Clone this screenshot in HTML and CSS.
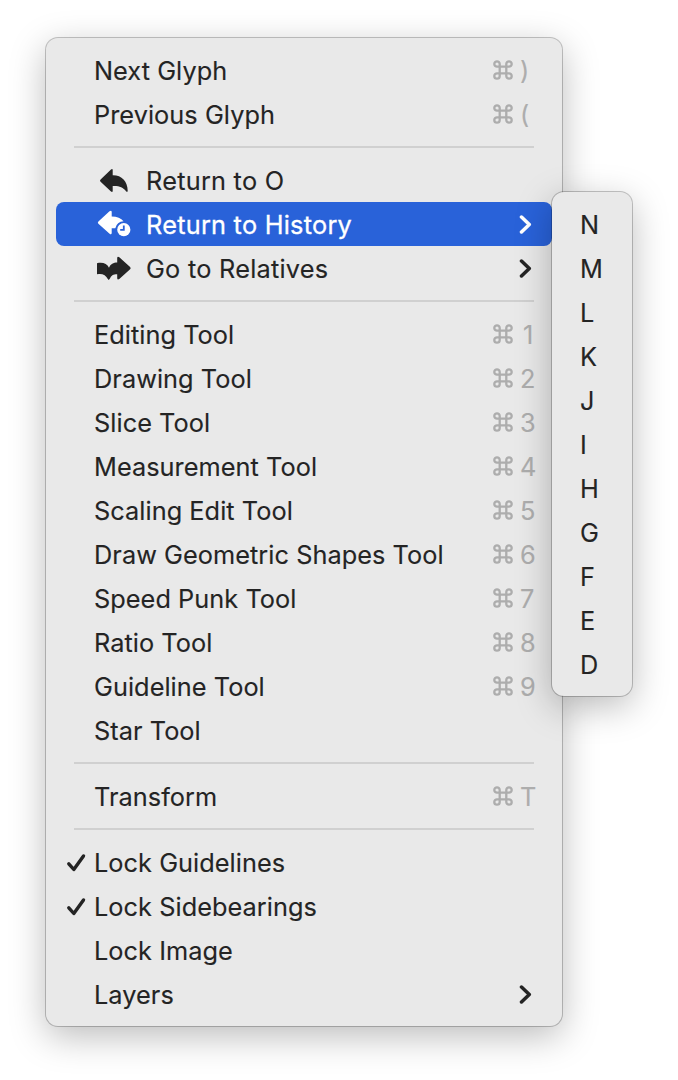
FILE: index.html
```
<!DOCTYPE html>
<html lang="en">
<head>
<meta charset="utf-8">
<title>Menu</title>
<link rel="stylesheet" href="styles.css">
</head>
<body>
<svg class="defs" width="0" height="0">
  <symbol id="cmd" viewBox="0 0 20 20"><path d="M6.700 6.700V4A2.700 2.700 0 1 0 4 6.700H16A2.700 2.700 0 1 0 13.300 4V16A2.700 2.700 0 1 0 16 13.300H4A2.700 2.700 0 1 0 6.700 16Z"/></symbol>
  <symbol id="chev" viewBox="0 0 14 20"><path d="M3.500 3L11.300 10.500L3.500 18"/></symbol>
  <symbol id="check" viewBox="0 0 20 20"><path d="M2.800 11.800L7.800 17.500L17.500 4"/></symbol>
</svg>
<div class="stage">
  <ul class="menu">
    <li class="item"><span class="label">Next Glyph</span><svg class="cmd"><use href="#cmd"/></svg><span class="key">)</span></li>
    <li class="item"><span class="label">Previous Glyph</span><svg class="cmd"><use href="#cmd"/></svg><span class="key">(</span></li>
    <li class="sep"></li>
    <li class="item wide"><svg class="icon" viewBox="0 0 40 44"><path d="M6.6 21.4L17 11.5Q18.6 10.4 18.7 12V17.2C27.500 17 33.700 23 33.700 33Q33.500 34.500 32.200 33.400C29 29 25 27.700 18.700 28V33Q18.500 34.600 17 33.500L6.600 23.800Q5.300 22.600 6.600 21.400Z"/></svg><span class="label">Return to O</span></li>
    <li class="item wide active"><svg class="icon" viewBox="0 0 40 44"><path d="M4.400 19.400L15.500 9.300Q17.600 8 17.700 10V14.600C23 14.700 27.200 16.300 29.500 19.200A8.500 8.500 0 0 0 21.300 26.200H17.700V31Q17.500 33 15.600 31.700L4.400 21.700Q3.200 20.500 4.400 19.400Z"/><circle cx="29.800" cy="27.700" r="6.600"/><path class="hands" d="M29.800 23.600V27.900H26.200"/></svg><span class="label">Return to History</span><svg class="chev"><use href="#chev"/></svg></li>
    <li class="item wide"><svg class="icon" viewBox="0 0 40 44"><path d="M3 17.200C8.500 16 13 17.300 15 21.800C16.500 18 19.500 16.500 23.200 16.500V12Q23.400 9.900 25.300 11.200L36.100 20.900Q37.300 22 36.100 23.200L25.300 33.100Q23.400 34.300 23.200 32.300V28.200C19 28.200 17.300 29.500 15.600 33.100Q14.700 34.700 13.800 33.100C12 29 8 27.200 3.600 28.200Q3 28.300 3 27.500Z"/></svg><span class="label">Go to Relatives</span><svg class="chev"><use href="#chev"/></svg></li>
    <li class="sep"></li>
    <li class="item"><span class="label">Editing Tool</span><svg class="cmd"><use href="#cmd"/></svg><span class="key one">1</span></li>
    <li class="item"><span class="label">Drawing Tool</span><svg class="cmd"><use href="#cmd"/></svg><span class="key">2</span></li>
    <li class="item"><span class="label">Slice Tool</span><svg class="cmd"><use href="#cmd"/></svg><span class="key">3</span></li>
    <li class="item"><span class="label">Measurement Tool</span><svg class="cmd"><use href="#cmd"/></svg><span class="key">4</span></li>
    <li class="item"><span class="label">Scaling Edit Tool</span><svg class="cmd"><use href="#cmd"/></svg><span class="key">5</span></li>
    <li class="item"><span class="label">Draw Geometric Shapes Tool</span><svg class="cmd"><use href="#cmd"/></svg><span class="key">6</span></li>
    <li class="item"><span class="label">Speed Punk Tool</span><svg class="cmd"><use href="#cmd"/></svg><span class="key">7</span></li>
    <li class="item"><span class="label">Ratio Tool</span><svg class="cmd"><use href="#cmd"/></svg><span class="key">8</span></li>
    <li class="item"><span class="label">Guideline Tool</span><svg class="cmd"><use href="#cmd"/></svg><span class="key">9</span></li>
    <li class="item"><span class="label">Star Tool</span></li>
    <li class="sep"></li>
    <li class="item"><span class="label">Transform</span><svg class="cmd"><use href="#cmd"/></svg><span class="key">T</span></li>
    <li class="sep"></li>
    <li class="item checked"><svg class="check"><use href="#check"/></svg><span class="label">Lock Guidelines</span></li>
    <li class="item checked"><svg class="check"><use href="#check"/></svg><span class="label">Lock Sidebearings</span></li>
    <li class="item"><span class="label">Lock Image</span></li>
    <li class="item"><span class="label">Layers</span><svg class="chev"><use href="#chev"/></svg></li>
  </ul>
  <ul class="menu submenu">
    <li class="item">N</li><li class="item">M</li><li class="item">L</li><li class="item">K</li><li class="item">J</li><li class="item">I</li><li class="item">H</li><li class="item">G</li><li class="item">F</li><li class="item">E</li><li class="item">D</li>
  </ul>
</div>
</body>
</html>
```
FILE: styles.css
```
* { box-sizing: border-box; }
body { margin: 0; background: #fff; font-family: Inter, "Liberation Sans", sans-serif; font-size: 25.3px; color: #242424; overflow: hidden; }
.defs { position: absolute; }
.stage { position: relative; height: 1080px; padding: 38px 0 0 46px; }
.menu { list-style: none; margin: 0; width: 516px; padding: 10px; background: #e9e9e9; border-radius: 12px;
  box-shadow: 0 0 0 1px rgba(0,0,0,.22), 0 10px 36px rgba(0,0,0,.27); -webkit-text-stroke: .12px currentColor; }
.item { display: flex; align-items: center; height: 44px; padding: 0 16px 0 38px; border-radius: 8px; white-space: nowrap; letter-spacing: .05px; }
.wide { letter-spacing: .25px; }
.active { background: #2962d9; color: #fff; -webkit-text-stroke-width: .3px; }
.label { flex: 1; }
.sep { height: 22px; padding: 10px 18px; }
.sep::before { content: ""; display: block; height: 2px; background: #d0d0d0; }
.icon { width: 40px; height: 44px; margin-right: 12px; fill: currentColor; }
.hands { fill: none; stroke: #2962d9; stroke-width: 1.8; }
.cmd { width: 20px; height: 20px; margin-right: 7px; fill: none; stroke: #adadad; stroke-width: 2.3; }
.key { width: 16px; color: #adadad; }
.one { padding-left: 3px; }
.chev { width: 14px; height: 20px; margin-right: 4px; fill: none; stroke: currentColor; stroke-width: 3.5; stroke-linecap: round; stroke-linejoin: round; }
.checked { padding-left: 10px; }
.check { width: 20px; height: 20px; margin-right: 8px; fill: none; stroke: currentColor; stroke-width: 3.4; stroke-linecap: round; stroke-linejoin: round; }
.submenu { position: absolute; left: 552px; top: 192px; width: 80px; padding: 10px 0; }
.submenu .item { padding: 0 28px; }
```
